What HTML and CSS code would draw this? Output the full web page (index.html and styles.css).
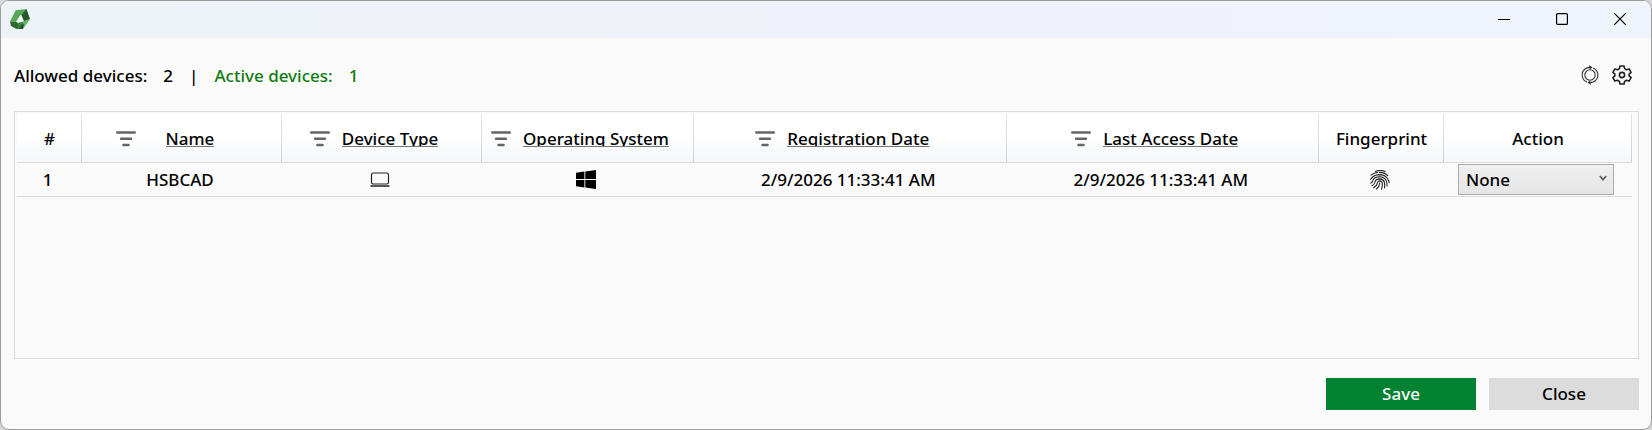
FILE: index.html
```html
<!DOCTYPE html>
<html lang="en">
<head>
    <meta charset="UTF-8">
    <meta name="viewport" content="width=device-width, initial-scale=1.0">
    <title>Devices</title>
    <link rel="stylesheet" href="styles.css">
</head>
<body>

<!-- Shared icons -->
<svg class="sprite" aria-hidden="true">
    <symbol id="filter" viewBox="0 0 20 16">
        <path d="M1.2 1.5h17.6M5 7.7h10M7.4 14h5.2" fill="none" stroke="#666" stroke-width="2.4" stroke-linecap="round"/>
    </symbol>
</svg>

<div class="window">
    <header class="titlebar">
        <svg class="logo" viewBox="0 0 20 20" aria-hidden="true">
            <path d="M5.7 1.3 16.5 0 13 6 10.5 6 6 12.8 0 12.5z" fill="#58a957"/>
            <path d="M16.5 0 20 10 14 12.5 11.5 6z" fill="#28592b"/>
            <path d="M20 10 13 20 10.5 14 14 12z" fill="#63b45f"/>
            <path d="M5 13.5 13.5 12.5 10.5 20H6.5z" fill="#3d8a40"/>
            <path d="M0 12.5 6 12.8 9 16 6.5 20 1 17z" fill="#2d6a30"/>
            <path d="M10.5 16 14 14.5 13 20H9z" fill="#28592b"/>
            <path d="M10.5 6 13.5 12.5 7 14z" fill="#f4f8f6"/>
        </svg>
        <div class="window-buttons">
            <button type="button" aria-label="Minimize"><svg viewBox="0 0 12 12"><path d="M0 6.5h12"/></svg></button>
            <button type="button" aria-label="Maximize"><svg viewBox="0 0 12 12"><rect x=".6" y=".6" width="10.8" height="10.8" rx="1"/></svg></button>
            <button type="button" aria-label="Close window"><svg viewBox="0 0 12 12"><path d="M.3.3l11.4 11.4M11.7.3.3 11.7"/></svg></button>
        </div>
    </header>

    <main class="content">
        <div class="toolbar">
            <div class="counts">
                <span>Allowed devices:</span>
                <span>2</span>
                <span>|</span>
                <span class="active">Active devices:</span>
                <span class="active">1</span>
            </div>
            <div class="tools">
                <button type="button" aria-label="Refresh">
                    <svg viewBox="0 0 20 20" fill="none" stroke="#333" stroke-width="1.1">
                        <circle cx="10" cy="10" r="5.2"/>
                        <path d="M7 17.1A7.6 7.6 0 0 1 10 2.4l1.2.1M13 2.9a7.6 7.6 0 0 1-3 14.7l-1.2-.1"/>
                        <path d="M9.2.8l2.4 1.7-2 1.4M10.8 19.2l-2.4-1.7 2-1.4"/>
                    </svg>
                </button>
                <button type="button" aria-label="Settings">
                    <svg viewBox="0 0 20 20" fill="none" stroke="#222" stroke-width="1.6" stroke-linejoin="round">
                        <circle cx="10" cy="10" r="2.6"/>
                        <path d="M8 1h4l.6 2.6 1.9 1.1 2.6-.8 2 3.4-2 1.9v1.6l2 1.9-2 3.4-2.6-.8-1.9 1.1L12 19H8l-.6-2.6-1.9-1.1-2.6.8-2-3.4 2-1.9V9.2l-2-1.9 2-3.4 2.6.8 1.9-1.1z"/>
                    </svg>
                </button>
            </div>
        </div>

        <div class="grid">
            <table>
                <colgroup>
                    <col class="col-num">
                    <col class="col-name">
                    <col class="col-type">
                    <col class="col-os">
                    <col>
                    <col>
                    <col class="col-finger">
                    <col class="col-action">
                </colgroup>
                <thead>
                    <tr>
                        <th>#</th>
                        <th><div class="head"><svg class="filter"><use href="#filter"/></svg><button type="button" class="sort"><span>Name</span></button></div></th>
                        <th><div class="head"><svg class="filter"><use href="#filter"/></svg><button type="button" class="sort"><span>Device Type</span></button></div></th>
                        <th><div class="head"><svg class="filter"><use href="#filter"/></svg><button type="button" class="sort"><span>Operating System</span></button></div></th>
                        <th><div class="head"><svg class="filter"><use href="#filter"/></svg><button type="button" class="sort"><span>Registration Date</span></button></div></th>
                        <th><div class="head"><svg class="filter"><use href="#filter"/></svg><button type="button" class="sort"><span>Last Access Date</span></button></div></th>
                        <th>Fingerprint</th>
                        <th id="action">Action</th>
                    </tr>
                </thead>
                <tbody>
                    <tr>
                        <td>1</td>
                        <td>HSBCAD</td>
                        <td>
                            <svg class="icon" viewBox="0 0 20 20" role="img" aria-label="Laptop" fill="none" stroke="#222">
                                <rect x="1.5" y="3" width="17" height="11" rx="1.8" stroke-width="1.2"/>
                                <path d="M.5 16h19" stroke-width="1.3"/>
                            </svg>
                        </td>
                        <td>
                            <svg class="icon" viewBox="0 0 20 20" role="img" aria-label="Windows">
                                <path d="M0 2.7 8.4 1.5v7.4H0zM9.3 1.4 20 0v8.9H9.3zM0 9.9h8.4v7.6L0 16.3zM9.3 9.9H20v9.2L9.3 17.6z"/>
                            </svg>
                        </td>
                        <td>2/9/2026 11:33:41 AM</td>
                        <td>2/9/2026 11:33:41 AM</td>
                        <td>
                            <svg class="icon" viewBox="0 0 20 20" role="img" aria-label="Fingerprint" fill="none" stroke="#222" stroke-width="1.1" stroke-linecap="round">
                                <path d="M5.5 1.6Q10-.6 15 1.6"/>
                                <path d="M1 5.2Q4 2.7 7.5 2.5M9.5 2.4q5 0 8.3 3.2"/>
                                <path d="M.6 9.5Q3 4.8 9.5 4.6q5 0 7.6 3.4 1.5 2 2.2 4.6"/>
                                <path d="M.8 13.2q1.6-.8 2-2.6Q4 6.9 9.8 6.8q4.4.1 6.3 3.6 1.1 2.5 1 5.6"/>
                                <path d="M2 15.8q2.7-1.4 3.2-4.3Q6 9 9.8 8.9q3.5.2 4.5 3.1.7 2.9.2 6"/>
                                <path d="M3.8 17.8q3-1.8 3.7-5.2.6-1.7 2.3-1.7 2.2.1 2.5 2.4.3 3-.7 6"/>
                                <path d="M6.6 19q2.7-2.2 3.2-6"/>
                            </svg>
                        </td>
                        <td>
                            <div class="select-box">
                                <select aria-labelledby="action">
                                    <option>None</option>
                                </select>
                                <svg class="arrow" viewBox="0 0 8 6" aria-hidden="true"><path d="M.8 1 4 4.6 7.2 1" fill="none" stroke="#606060" stroke-width="1.8"/></svg>
                            </div>
                        </td>
                    </tr>
                </tbody>
            </table>
        </div>

        <footer class="footer">
            <button type="button" class="btn btn-save">Save</button>
            <button type="button" class="btn btn-close">Close</button>
        </footer>
    </main>
</div>

</body>
</html>
```
FILE: styles.css
```css
* {
    box-sizing: border-box;
}
body {
    margin: 0;
    background-color: #d6d6d6;
    color: #000;
    font-family: "Noto Sans", "Open Sans", sans-serif;
    font-size: 17px;
    font-weight: 500;
    line-height: 24px;
}
button, select {
    font: inherit;
    color: inherit;
}
button {
    padding: 0;
    border: none;
    background: none;
}
.sprite {
    position: absolute;
    width: 0;
    height: 0;
}

/* Window frame */
.window {
    display: flex;
    flex-direction: column;
    min-height: 100vh;
    border: 1px solid #9c9c9c;
    border-radius: 9px;
    overflow: hidden;
    background-color: #fafafa;
}
.titlebar {
    display: flex;
    justify-content: space-between;
    align-items: flex-start;
    height: 37px;
    padding-left: 9px;
    background: linear-gradient(90deg, #eef3f8, #eff3fa);
}
.logo {
    width: 20px;
    height: 20px;
    margin-top: 8px;
}
.window-buttons {
    display: flex;
    margin-right: 2px;
}
.window-buttons button {
    display: flex;
    align-items: center;
    justify-content: center;
    width: 58px;
    height: 36px;
}
.window-buttons svg {
    width: 12px;
    height: 12px;
    fill: none;
    stroke: #000;
    stroke-width: 1.2;
}

/* Content */
.content {
    display: flex;
    flex-direction: column;
    flex: 1;
    padding: 23px 12px 19px 13px;
}
.toolbar {
    display: flex;
    justify-content: space-between;
    align-items: center;
    height: 28px;
    padding-right: 7px;
}
.counts {
    display: flex;
    gap: 16px;
    padding-top: 2px;
}
.active {
    color: #107c10;
}
.tools {
    display: flex;
    gap: 12px;
}
.tools button, .tools svg {
    display: block;
    width: 20px;
    height: 20px;
}

/* Device grid */
.grid {
    flex: 1;
    margin: 22px 0 19px;
    padding: 2px;
    border: 1px solid #dcdcdc;
}
table {
    width: 100%;
    table-layout: fixed;
    border-collapse: separate;
    border-spacing: 0;
    border-right: 4px solid transparent;
}
.col-num { width: 65px; }
.col-name, .col-type { width: 200px; }
.col-os { width: 212px; }
.col-finger { width: 125px; }
.col-action { width: 188px; }
th {
    height: 49px;
    padding: 2px 0 0;
    border-bottom: 1px solid #dcdcdc;
    background: linear-gradient(#e4e4e4, #cfd1d3) right / 1px 100% no-repeat, linear-gradient(#fff 40%, #f5f7f9);
    font-weight: 500;
    white-space: nowrap;
}
.head {
    display: flex;
    justify-content: center;
    align-items: center;
    gap: 12px;
    padding-right: 16px;
}
.filter {
    flex: none;
    width: 20px;
    height: 16px;
}
.sort {
    min-width: 84px;
    line-height: 20px;
}
/* The rule sits on the text and the descenders stop at it */
.sort span {
    display: inline-block;
    height: 18px;
    overflow: hidden;
    border-bottom: 1px solid #777;
    vertical-align: top;
}
td {
    height: 34px;
    padding: 0 4px 0 0;
    border-bottom: 1px solid #dcdcdc;
    text-align: center;
    white-space: nowrap;
}
.icon {
    display: block;
    width: 20px;
    height: 20px;
    margin: 0 auto;
}
.select-box {
    position: relative;
    width: 156px;
    margin: 0 auto;
}
.select-box select {
    display: block;
    width: 100%;
    height: 31px;
    padding: 0 7px;
    border: 1px solid #acacac;
    border-radius: 0;
    background: linear-gradient(#f0f0f0, #e5e5e5);
    appearance: none;
}
.arrow {
    position: absolute;
    top: 11px;
    right: 7px;
    width: 8px;
    height: 6px;
    pointer-events: none;
}

/* Bottom buttons */
.footer {
    display: flex;
    justify-content: flex-end;
    gap: 13px;
}
.btn {
    width: 150px;
    height: 32px;
}
.btn-save {
    background-color: #008232;
    color: #fff;
}
.btn-close {
    background-color: #dcdcdc;
}
```
